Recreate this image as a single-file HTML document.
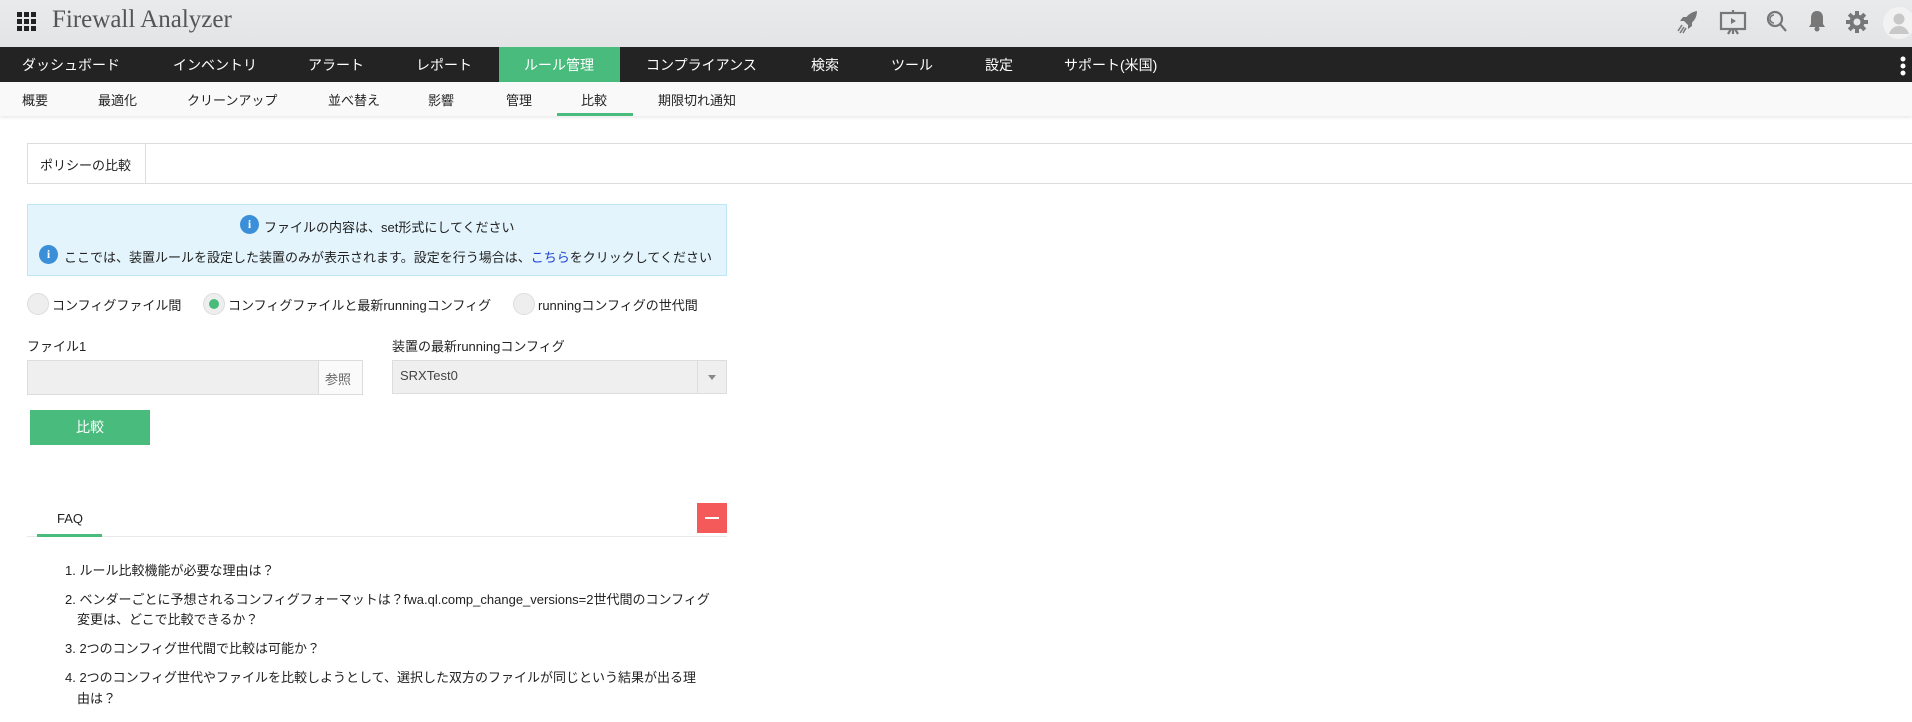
<!DOCTYPE html>
<html><head><meta charset="utf-8"><style>
*{margin:0;padding:0;box-sizing:border-box}
body{width:1912px;height:722px;overflow:hidden;background:#fff;font-family:"Liberation Sans","Noto Sans CJK JP",sans-serif;color:#222;position:relative}
.a{position:absolute;white-space:nowrap}
#hdr{position:absolute;left:0;top:0;width:1912px;height:47px;background:linear-gradient(#e9eaec,#e3e4e6)}
#nav{position:absolute;left:0;top:47px;width:1912px;height:35px;background:#232323}
#nav .a{color:#fff;font-size:14px;top:8px}
#sub{position:absolute;left:0;top:82px;width:1912px;height:34px;background:#f9f9f9;box-shadow:0 2px 3px rgba(0,0,0,.08)}
#sub .a{font-size:13px;top:8px;color:#222}
.sm{font-size:13px}
.ic{position:absolute;width:19px;height:19px;border-radius:50%;background:#3b8fd9;color:#fff;font-size:12px;font-weight:bold;text-align:center;line-height:19px;font-family:"Liberation Serif",serif}
.rad{position:absolute;width:22px;height:22px;border-radius:50%;background:#eee;border:1px solid #ddd;top:293px}
</style></head><body>
<div id="hdr">
<svg class="a" style="left:17px;top:12px" width="20" height="20" viewBox="0 0 20 20" fill="#222"><rect x="0" y="0" width="5" height="5"/><rect x="7" y="0" width="5" height="5"/><rect x="14" y="0" width="5" height="5"/><rect x="0" y="7" width="5" height="5"/><rect x="7" y="7" width="5" height="5"/><rect x="14" y="7" width="5" height="5"/><rect x="0" y="14" width="5" height="5"/><rect x="7" y="14" width="5" height="5"/><rect x="14" y="14" width="5" height="5"/></svg>
<div class="a" style="left:52px;top:6px;font-family:'Liberation Serif',serif;font-size:25px;color:#555">Firewall Analyzer</div>
<svg class="a" style="left:1677px;top:10px" width="22" height="24" viewBox="0 0 22 24" fill="#777"><path d="M20 1 C14 2 9 6 7 11 L11 15 C16 13 20 8 20 1Z"/><path d="M7 11 L3 11 L6 7 L10 7Z M11 15 L11 19 L15 16 L15 12Z"/><path d="M5 15 L1 21 M7 17 L3 23 M9 18 L6 23" stroke="#777" stroke-width="1.5"/></svg>
<svg class="a" style="left:1719px;top:9px" width="28" height="26" viewBox="0 0 28 26" fill="none" stroke="#777" stroke-width="2.2"><rect x="2" y="4" width="24" height="16"/><path d="M14 1v3M14 20v5M9 25l3-5M19 25l-3-5"/><path d="M12 9l5 3-5 3z" fill="#777" stroke="none"/></svg>
<svg class="a" style="left:1766px;top:10px" width="22" height="24" viewBox="0 0 22 24" fill="none" stroke="#777" stroke-width="2.2"><circle cx="9" cy="9" r="7"/><path d="M14 14l6 7"/><path d="M8 5a4 4 0 0 0 0 8" stroke-width="1.5"/></svg>
<svg class="a" style="left:1808px;top:10px" width="18" height="22" viewBox="0 0 18 22" fill="#777"><path d="M9 1c-4 0-6 3-6 7v6l-2 3h16l-2-3V8c0-4-2-7-6-7z"/><circle cx="9" cy="19" r="2.5"/></svg>
<svg class="a" style="left:1846px;top:11px" width="22" height="22" viewBox="0 0 22 22"><g fill="#777"><circle cx="11" cy="11" r="7.5"/><rect x="9" y="0" width="4" height="22"/><rect x="0" y="9" width="22" height="4"/><rect x="9" y="0" width="4" height="22" transform="rotate(45 11 11)"/><rect x="9" y="0" width="4" height="22" transform="rotate(-45 11 11)"/></g><circle cx="11" cy="11" r="3.5" fill="#e6e7e9"/></svg>
<svg class="a" style="left:1883px;top:7px" width="32" height="32" viewBox="0 0 32 32"><circle cx="16" cy="16" r="16" fill="#f2f2f2"/><circle cx="16" cy="12" r="5.5" fill="#c8c8c8"/><path d="M6 27c2-6 6-8 10-8s8 2 10 8z" fill="#c8c8c8"/></svg>
</div>
<div id="nav">
<div class="a" style="left:499px;top:0;width:121px;height:35px;background:#48bb7d"></div>
<div class="a" style="left:22px">ダッシュボード</div>
<div class="a" style="left:173px">インベントリ</div>
<div class="a" style="left:308px">アラート</div>
<div class="a" style="left:416px">レポート</div>
<div class="a" style="left:524px">ルール管理</div>
<div class="a" style="left:646px">コンプライアンス</div>
<div class="a" style="left:811px">検索</div>
<div class="a" style="left:891px">ツール</div>
<div class="a" style="left:985px">設定</div>
<div class="a" style="left:1064px">サポート(米国)</div>
<svg class="a" style="left:1899px;top:9px" width="8" height="20" viewBox="0 0 8 20" fill="#fff"><circle cx="4" cy="3" r="2.5"/><circle cx="4" cy="10" r="2.5"/><circle cx="4" cy="17" r="2.5"/></svg>
</div>
<div id="sub">
<div class="a" style="left:22px">概要</div>
<div class="a" style="left:98px">最適化</div>
<div class="a" style="left:187px">クリーンアップ</div>
<div class="a" style="left:328px">並べ替え</div>
<div class="a" style="left:428px">影響</div>
<div class="a" style="left:506px">管理</div>
<div class="a" style="left:581px">比較</div>
<div class="a" style="left:658px">期限切れ通知</div>
<div class="a" style="left:557px;top:31px;width:76px;height:3px;background:#48bb7d"></div>
</div>
<div class="a" style="left:27px;top:143px;width:1885px;height:41px;border:1px solid #ddd;border-right:none"></div>
<div class="a" style="left:145px;top:143px;width:1px;height:41px;background:#ddd"></div>
<div class="a sm" style="left:40px;top:155px">ポリシーの比較</div>

<div class="a" style="left:27px;top:204px;width:700px;height:72px;background:#e3f4fc;border:1px solid #bfe6f7"></div>
<div class="ic" style="left:240px;top:215px">i</div>
<div class="a sm" style="left:264px;top:217px">ファイルの内容は、set形式にしてください</div>
<div class="ic" style="left:39px;top:245px">i</div>
<div class="a sm" style="left:64px;top:247px">ここでは、装置ルールを設定した装置のみが表示されます。設定を行う場合は、<span style="color:#1a3fd1">こちら</span>をクリックしてください</div>

<div class="rad" style="left:27px"></div>
<div class="a sm" style="left:52px;top:295px">コンフィグファイル間</div>
<div class="rad" style="left:203px"><div style="position:absolute;left:5px;top:5px;width:10px;height:10px;border-radius:50%;background:#48bb7d"></div></div>
<div class="a sm" style="left:228px;top:295px">コンフィグファイルと最新runningコンフィグ</div>
<div class="rad" style="left:513px"></div>
<div class="a sm" style="left:538px;top:295px">runningコンフィグの世代間</div>

<div class="a sm" style="left:27px;top:336px">ファイル1</div>
<div class="a sm" style="left:392px;top:336px">装置の最新runningコンフィグ</div>
<div class="a" style="left:27px;top:360px;width:336px;height:35px;background:#efefef;border:1px solid #ddd"></div>
<div class="a" style="left:318px;top:361px;width:44px;height:33px;background:#fafafa;border-left:1px solid #ddd"></div>
<div class="a sm" style="left:325px;top:369px;color:#666">参照</div>
<div class="a" style="left:392px;top:360px;width:335px;height:34px;background:#efefef;border:1px solid #ddd"></div>
<div class="a" style="left:697px;top:361px;width:1px;height:32px;background:#ddd"></div>
<div class="a sm" style="left:400px;top:368px;color:#444">SRXTest0</div>
<div class="a" style="left:708px;top:375px;width:0;height:0;border-left:4px solid transparent;border-right:4px solid transparent;border-top:5px solid #888"></div>
<div class="a" style="left:30px;top:410px;width:120px;height:35px;background:#48bb7d;color:#fff;font-size:14px;text-align:center;line-height:35px">比較</div>

<div class="a sm" style="left:57px;top:511px">FAQ</div>
<div class="a" style="left:27px;top:536px;width:700px;height:1px;background:#e8e8e8"></div>
<div class="a" style="left:37px;top:534px;width:65px;height:3px;background:#48bb7d"></div>
<div class="a" style="left:697px;top:503px;width:30px;height:30px;background:#f55a5a"></div>
<div class="a" style="left:705px;top:517px;width:14px;height:2px;background:#fff"></div>

<div class="a sm" style="left:65px;top:560px">1. ルール比較機能が必要な理由は？</div>
<div class="a sm" style="left:65px;top:589px">2. ベンダーごとに予想されるコンフィグフォーマットは？fwa.ql.comp_change_versions=2世代間のコンフィグ</div>
<div class="a sm" style="left:77px;top:609px">変更は、どこで比較できるか？</div>
<div class="a sm" style="left:65px;top:638px">3. 2つのコンフィグ世代間で比較は可能か？</div>
<div class="a sm" style="left:65px;top:667px">4. 2つのコンフィグ世代やファイルを比較しようとして、選択した双方のファイルが同じという結果が出る理</div>
<div class="a sm" style="left:77px;top:688px">由は？</div>
</body></html>
